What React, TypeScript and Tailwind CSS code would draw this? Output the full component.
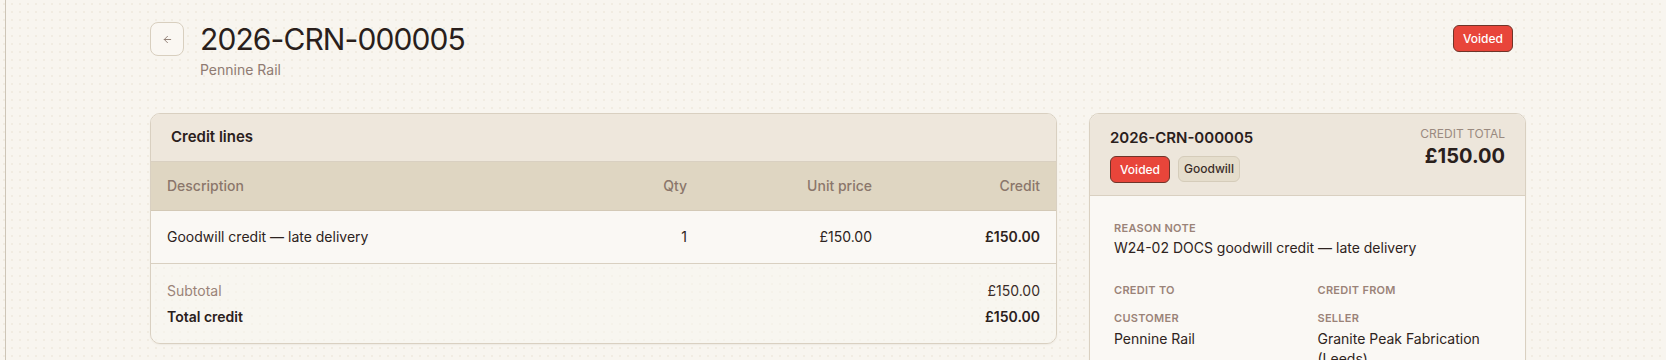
import React from 'react';
import { ArrowLeft } from 'lucide-react';

const lines = [
  { description: 'Goodwill credit — late delivery', qty: 1, unit: '£150.00', credit: '£150.00' },
];

const Label = ({ children }: { children: React.ReactNode }) => (
  <div className="text-[11px] leading-4 font-semibold uppercase tracking-wide text-[#9a8378]">{children}</div>
);

const App = () => {
  return (
    <div
      className="min-h-screen flex bg-[#f8f5ef] bg-[radial-gradient(#f1ece2_1px,transparent_1px)] bg-[length:8px_8px] text-[#2a201c]"
      style={{ fontFamily: 'Inter, "Noto Sans", sans-serif' }}
    >
      <div className="w-[6px] shrink-0 border-r border-[#cdc5b7]" />

      <main className="flex-1 pl-[144px] pr-[140px] pt-[22px]">
        {/* page header */}
        <div className="flex items-start justify-between pr-[13px]">
          <div className="flex items-start gap-4">
            <button
              type="button"
              className="w-[34px] h-[34px] flex items-center justify-center rounded-lg border border-[#d8cfbf] bg-[#faf7f2] text-[#8c7a70]"
            >
              <ArrowLeft size={11} strokeWidth={2} />
            </button>
            <div>
              <h1 className="text-[30px] leading-[34px] font-normal tracking-[-0.03em] text-[#2a1f1c]">2026-CRN-000005</h1>
              <p className="mt-[4px] text-sm leading-5 text-[#8f7b72]">Pennine Rail</p>
            </div>
          </div>
          <span className="mt-[3px] h-[27px] px-[9px] flex items-center rounded-md border border-[#6f3429] bg-[#e8453a] text-xs font-medium text-white">
            Voided
          </span>
        </div>

        <div className="mt-[33px] grid grid-cols-[907px_437px] gap-8 items-start">
          {/* credit lines */}
          <section className="rounded-[10px] border border-[#d9d0c1] overflow-hidden shadow-[0_1px_2px_rgba(80,60,40,0.06)]">
            <div className="h-[48px] px-5 flex items-center bg-[#eee7dc] border-b border-[#d9d0c1]">
              <h2 className="text-[15px] font-semibold text-[#2a201c]">Credit lines</h2>
            </div>
            <div className="h-[49px] px-4 grid grid-cols-[1fr_100px_185px_168px] items-center bg-[#dfd6c2] border-b border-[#d3c9b6] text-sm font-medium text-[#8b766b]">
              <div>Description</div>
              <div className="text-right">Qty</div>
              <div className="text-right">Unit price</div>
              <div className="text-right">Credit</div>
            </div>
            {lines.map((l) => (
              <div
                key={l.description}
                className="h-[53px] px-4 grid grid-cols-[1fr_100px_185px_168px] items-center bg-[#faf8f4] border-b border-[#d9d0c1] text-sm text-[#2d2320]"
              >
                <div>{l.description}</div>
                <div className="text-right">{l.qty}</div>
                <div className="text-right">{l.unit}</div>
                <div className="text-right font-semibold">{l.credit}</div>
              </div>
            ))}
            <div className="px-4 pt-[17px] pb-[16px] flex flex-col gap-[6px] text-sm leading-5 bg-[#f9f6f0]/60">
              <div className="flex justify-between">
                <span className="text-[#9a8378]">Subtotal</span>
                <span className="text-[#3b2d29]">£150.00</span>
              </div>
              <div className="flex justify-between font-semibold text-[#2a201c]">
                <span>Total credit</span>
                <span>£150.00</span>
              </div>
            </div>
          </section>

          {/* summary */}
          <aside className="rounded-[10px] border border-[#d9d0c1] overflow-hidden bg-[#faf8f4] shadow-[0_1px_2px_rgba(80,60,40,0.06)]">
            <div className="px-5 pt-3 pb-3 flex justify-between bg-[#ede6db] border-b border-[#d9d0c1]">
              <div>
                <div className="text-[15px] leading-6 font-semibold text-[#2a201c]">2026-CRN-000005</div>
                <div className="mt-[6px] flex gap-2">
                  <span className="h-[27px] px-[9px] flex items-center rounded-md border border-[#6f3429] bg-[#e8453a] text-xs font-medium text-white">
                    Voided
                  </span>
                  <span className="h-[26px] px-[5px] flex items-center rounded-md border border-[#d5ccba] bg-[#e5ddcc] text-xs font-medium text-[#3a2d28]">
                    Goodwill
                  </span>
                </div>
              </div>
              <div className="text-right">
                <div className="text-xs leading-4 uppercase text-[#9a8a80]">Credit total</div>
                <div className="text-xl leading-7 font-bold text-[#2a201c]">£150.00</div>
              </div>
            </div>

            <div className="px-6 pt-6 pb-6">
              <Label>Reason note</Label>
              <div className="mt-[2px] text-sm leading-5 text-[#2e2320]">W24-02 DOCS goodwill credit — late delivery</div>

              <div className="mt-6 grid grid-cols-2 gap-x-5">
                <div>
                  <Label>Credit to</Label>
                  <div className="mt-3">
                    <Label>Customer</Label>
                    <div className="mt-[3px] text-sm leading-5 text-[#2e2320]">Pennine Rail</div>
                  </div>
                </div>
                <div>
                  <Label>Credit from</Label>
                  <div className="mt-3">
                    <Label>Seller</Label>
                    <div className="mt-[3px] text-sm leading-5 text-[#2e2320]">Granite Peak Fabrication (Leeds)</div>
                  </div>
                </div>
              </div>
            </div>
          </aside>
        </div>
      </main>
    </div>
  );
};

export default App;
